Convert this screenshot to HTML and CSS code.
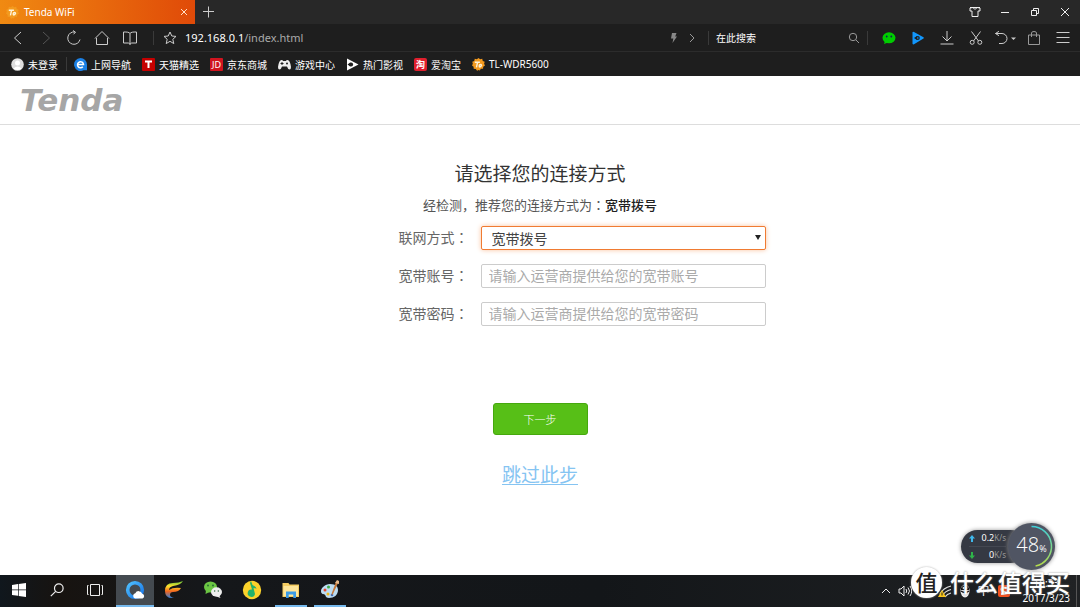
FILE: index.html
```html
<!DOCTYPE html>
<html lang="zh-CN">
<head>
<meta charset="utf-8">
<title>Tenda WiFi</title>
<link rel="stylesheet" href="styles.css">
</head>
<body>
<svg width="0" height="0" class="defs" aria-hidden="true">
  <defs>
    <linearGradient id="ring" x1="0" y1="0" x2="0" y2="1"><stop offset="0" stop-color="#3fd0d8"/><stop offset="1" stop-color="#b5dc4a"/></linearGradient>
    <linearGradient id="flame" x1="0" y1="0" x2="0" y2="1"><stop offset="0" stop-color="#5fc33a"/><stop offset=".3" stop-color="#ffe32e"/><stop offset=".6" stop-color="#f4661c"/><stop offset="1" stop-color="#2b7fe0"/></linearGradient>
    <linearGradient id="qring" x1="0" y1="0" x2="1" y2="1"><stop offset="0" stop-color="#4fc0ff"/><stop offset="1" stop-color="#1673e6"/></linearGradient>
    <symbol id="gear" viewBox="0 0 14 14">
      <path d="M7 0l1.800 1.400 2.200-.5.6 2.200 2.100.9-.7 2.100 1 2-1.900 1.200-.2 2.300-2.300.1L8.300 13.500 7 12.900l-1.500.9-1.400-1.900-2.300-.2-.1-2.300L0 8.100l.9-2L.3 4l2.100-.9L3 .9l2.200.5z" fill="#f39a1f"/>
      <path d="M3 4.500h5.500M6 4.500L4.800 10M7.500 9.500c3 0 3.500-2.500 1.700-2.500-1.700 0-2.200 2.500-.2 3" fill="none" stroke="#fff3d8" stroke-width="1.500"/>
    </symbol>
  </defs>
</svg>

<header class="browser">
  <div class="tabs">
    <div class="tab">
      <svg class="fav"><use href="#gear"/></svg>
      <span class="tab-title">Tenda WiFi</span>
      <button class="icon-btn tab-close" aria-label="关闭标签"><svg width="8" height="8" viewBox="0 0 8 8"><path d="M1 1l6 6M7 1L1 7"/></svg></button>
    </div>
    <button class="icon-btn new-tab" aria-label="新标签"><svg width="12" height="12" viewBox="0 0 12 12"><path d="M5.500.5v11M0 5.500h11"/></svg></button>
    <div class="window-controls">
      <button class="icon-btn" aria-label="皮肤"><svg width="12" height="12" viewBox="0 0 12 12"><path d="M4 1.500L1 2v3h2v5.500h6V5h2V2L8 1.500C7.500 3.500 4.500 3.500 4 1.500zM1 1.500h10"/></svg></button>
      <button class="icon-btn" aria-label="最小化"><svg width="10" height="10" viewBox="0 0 10 10"><path d="M1 5.500h8"/></svg></button>
      <button class="icon-btn" aria-label="还原"><svg width="10" height="10" viewBox="0 0 10 10"><path d="M1.500 3.500h5v5h-5zM3.500 3.500v-2h5v5h-2"/></svg></button>
      <button class="icon-btn" aria-label="关闭"><svg width="10" height="10" viewBox="0 0 10 10"><path d="M1 1l8 8M9 1L1 9"/></svg></button>
    </div>
  </div>

  <div class="toolbar">
    <nav class="nav">
      <button class="icon-btn" aria-label="后退"><svg width="16" height="16" viewBox="0 0 16 16"><path d="M11 2L4.500 8l6.500 6"/></svg></button>
      <button class="icon-btn dim" aria-label="前进"><svg width="16" height="16" viewBox="0 0 16 16"><path d="M5 2l6.500 6L5 14"/></svg></button>
      <button class="icon-btn" aria-label="刷新"><svg width="16" height="16" viewBox="0 0 16 16"><path d="M14 9.500A6.200 6.200 0 1 1 9 2M7 .5L9.500 2.200 7.500 4.300"/></svg></button>
      <button class="icon-btn" aria-label="主页"><svg width="16" height="16" viewBox="0 0 16 16"><path d="M1 8.500L8 1.500l7 7M2.500 8v6.500h11V8"/></svg></button>
      <button class="icon-btn" aria-label="阅读"><svg width="16" height="16" viewBox="0 0 16 16"><path d="M8 3.500C7 2 5 2 1.500 2v11H6c1 0 2 .5 2 1.500 0-1 1-1.500 2-1.500h4.500V2C11 2 9 2 8 3.500zv11"/></svg></button>
    </nav>
    <i class="sep"></i>
    <div class="address">
      <button class="icon-btn" aria-label="收藏"><svg width="14" height="14" viewBox="0 0 14 14"><path d="M7 1l1.800 4 4.200.4-3.200 2.900 1 4.300L7 10.300l-3.800 2.300 1-4.300L1 5.400 5.200 5z"/></svg></button>
      <div class="url" role="textbox" aria-label="地址"><b>192.168.0.1</b>/index.html</div>
      <button class="icon-btn" aria-label="极速模式"><svg width="10" height="12" viewBox="0 0 10 12"><path d="M3 1h4.500L6.200 4.500H8L3.500 11l.8-4.500H2z" class="bolt"/></svg></button>
      <button class="icon-btn grey" aria-label="展开"><svg width="10" height="10" viewBox="0 0 10 10"><path d="M3 1l4 4-4 4"/></svg></button>
    </div>
    <i class="sep"></i>
    <div class="search">
      <input type="text" placeholder="在此搜索" aria-label="在此搜索">
      <button class="icon-btn grey" aria-label="搜索"><svg width="12" height="12" viewBox="0 0 12 12"><circle cx="5" cy="5" r="3.700"/><path d="M8 8l3 3"/></svg></button>
    </div>
    <i class="sep"></i>
    <div class="tools">
      <button class="icon-btn" aria-label="微信"><svg width="14" height="14" viewBox="0 0 14 14"><g stroke="none"><ellipse cx="7" cy="6.800" rx="6.500" ry="5.500" fill="#0c0"/><path d="M3 10l-1 3 4-1.500z" fill="#0c0"/><circle cx="4.700" cy="5.500" r=".9" fill="#125"/><circle cx="9.300" cy="5.500" r=".9" fill="#125"/></g></svg></button>
      <button class="icon-btn" aria-label="视频"><svg width="14" height="14" viewBox="0 0 14 14"><g stroke="none"><path d="M1.500 1.200Q2 .3 3 1l9.500 5.300q.8.600 0 1.300L3 13.300q-1 .4-1.500-.5z" fill="#1296fb"/><path d="M3 7l3-2v4z" fill="#1e1e1e"/><circle cx="6.800" cy="7" r="2" fill="#1e1e1e"/><circle cx="6.800" cy="7" r=".8" fill="#1296fb"/></g></svg></button>
      <button class="icon-btn" aria-label="下载"><svg width="14" height="14" viewBox="0 0 14 14"><path d="M7 0v10M2.500 5.500L7 10l4.500-4.500M.5 13h13"/></svg></button>
      <button class="icon-btn" aria-label="截图"><svg width="14" height="14" viewBox="0 0 14 14"><path d="M2.500.5l7 9.500M11.500.5L4.500 10"/><circle cx="3.200" cy="11.300" r="2"/><circle cx="10.800" cy="11.300" r="2"/></svg></button>
      <button class="icon-btn" aria-label="撤销"><svg width="22" height="14" viewBox="0 0 22 14"><path d="M1.500 2.500H8a5 5 0 0 1 0 10H5M5 .3L1.500 2.500 5 4.700"/><path d="M17 6.500h5L19.500 9z" fill="#ccc" stroke="none"/></svg></button>
      <button class="icon-btn grey" aria-label="购物"><svg width="14" height="14" viewBox="0 0 14 14"><path d="M1.500 4h11v9.500h-11zM4.500 6V2Q4.500.5 7 .5T9.500 2v4"/></svg></button>
      <button class="icon-btn" aria-label="菜单"><svg width="14" height="14" viewBox="0 0 14 14"><path d="M.5 1.500h13M.5 6.500h13M.5 11.500h13"/></svg></button>
    </div>
  </div>

  <nav class="bookmarks">
    <a href="#"><svg viewBox="0 0 13 13"><circle cx="6.500" cy="6.500" r="6.300" fill="#ddd"/><circle cx="6.500" cy="5" r="2.500" fill="#fff"/><path d="M2.500 10.500Q6.500 6.500 10.500 10.500 6.500 13.500 2.500 10.500z" fill="#fff"/></svg>未登录</a>
    <i class="sep"></i>
    <a href="#"><svg viewBox="0 0 13 13"><path d="M6.500 0a6.500 6.500 0 1 0 3 12.300H13V6.500A6.500 6.500 0 0 0 6.500 0z" fill="#1b80e5"/><path d="M3.500 6.500h6A3 3 0 1 0 8.800 8.700" fill="none" stroke="#fff" stroke-width="1.500"/></svg>上网导航</a>
    <a href="#"><svg viewBox="0 0 13 13"><rect width="13" height="13" rx="1" fill="#c40000"/><path d="M3 3.500h7M6.500 3.500V10" stroke="#fff" stroke-width="2"/></svg>天猫精选</a>
    <a href="#"><span class="badge jd">JD</span>京东商城</a>
    <a href="#"><svg viewBox="0 0 13 13"><path d="M3.500 2Q5 2 5 3h3Q8 2 9.500 2 12 2 13 9q0 2.500-1.500 2.500T9 8.500H4q-1 3-2.500 3T0 9Q1 2 3.500 2z" fill="#eee"/><path d="M2.500 5.500h3M4 4v3" stroke="#1e1e1e"/><circle cx="9" cy="5.500" r="1" fill="#1e1e1e"/></svg>游戏中心</a>
    <a href="#"><svg viewBox="0 0 13 13"><path d="M1 .5L12.500 6.500 1 12.500z" fill="#fff"/><path d="M1.500 6.500l3-2.300v4.600z" fill="#1e1e1e"/><circle cx="5.200" cy="6.500" r="1.900" fill="#1e1e1e"/></svg>热门影视</a>
    <a href="#"><span class="badge tao">淘</span>爱淘宝</a>
    <a href="#"><svg viewBox="0 0 14 14"><use href="#gear"/></svg>TL-WDR5600</a>
  </nav>
</header>

<div class="site-header"><span class="logo">Tenda</span></div>

<main class="page">
  <h1>请选择您的连接方式</h1>
  <p class="detected">经检测，推荐您的连接方式为<span lang="zh-Hant" class="colon">：</span><strong>宽带拨号</strong></p>
  <form class="form">
    <label for="mode">联网方式<span lang="zh-Hant" class="colon">：</span></label>
    <div class="select-wrap"><select id="mode"><option>宽带拨号</option></select></div>
    <label for="account">宽带账号<span lang="zh-Hant" class="colon">：</span></label>
    <input id="account" type="text" placeholder="请输入运营商提供给您的宽带账号">
    <label for="password">宽带密码<span lang="zh-Hant" class="colon">：</span></label>
    <input id="password" type="text" placeholder="请输入运营商提供给您的宽带密码">
  </form>
  <button class="next" type="button">下一步</button>
  <a class="skip" href="#">跳过此步</a>
</main>

<footer class="taskbar">
  <div class="system">
    <button aria-label="开始"><svg width="14" height="14" viewBox="0 0 14 14"><path d="M0 2l6-.9v5.500H0zM6.700 1L14 0v6.600H6.700zM0 7.300h6v5.500L0 12zM6.700 7.300H14V14l-7.300-1z" fill="#fff"/></svg></button>
    <button aria-label="搜索"><svg width="14" height="14" viewBox="0 0 14 14" fill="none" stroke="#eee" stroke-width="1.200"><circle cx="8.800" cy="5.200" r="4.300"/><path d="M5.700 8.300L.8 13.200"/></svg></button>
    <button aria-label="任务视图"><svg width="18" height="14" viewBox="0 0 18 14" fill="none" stroke="#eee"><path d="M4.500 1.500h9v11h-9zM2.500 2.500h-1v9h1M15.500 2.500h1v9h-1"/></svg></button>
  </div>
  <div class="apps">
    <button class="open active" aria-label="QQ浏览器"><svg width="20" height="20" viewBox="0 0 20 20"><circle cx="10" cy="10" r="7.300" fill="none" stroke="url(#qring)" stroke-width="3.600"/><path d="M10 18.500a2.700 2.700 0 0 1 .3-5.200 3.700 3.700 0 0 1 6.900.4 2.500 2.500 0 0 1 .3 4.800z" fill="#fff"/></svg></button>
    <button aria-label="迅游"><svg width="20" height="20" viewBox="0 0 20 20"><path d="M19 1Q17 5 9 6 5 7 5 10q4-3 12-2-2 4-8 4-3 0-3 3 0 2 4 3-9 1-9-7Q1 3 9 3q6 0 10-2z" fill="url(#flame)"/></svg></button>
    <button aria-label="微信"><svg width="20" height="20" viewBox="0 0 20 20"><ellipse cx="7.500" cy="7" rx="6.500" ry="5.500" fill="#6cc644"/><path d="M3 10l-.5 4 4-2z" fill="#6cc644"/><ellipse cx="13.500" cy="12" rx="5.500" ry="4.700" fill="#eee"/><path d="M16 15l1.500 3-4-1.500z" fill="#eee"/><g fill="#263"><circle cx="5" cy="5.500" r=".9"/><circle cx="10" cy="5.500" r=".9"/><circle cx="11.700" cy="11" r=".7"/><circle cx="15.300" cy="11" r=".7"/></g></svg></button>
    <button aria-label="QQ音乐"><svg width="20" height="20" viewBox="0 0 20 20"><circle cx="10" cy="10" r="9.200" fill="#fbd22b"/><path d="M9 1l1.500 4q4 2 4 4-1-1-3-1l1.500 6a3.700 3.700 0 1 1-3-4.500L8 3z" fill="#22b26b"/></svg></button>
    <button class="open" aria-label="文件资源管理器"><svg width="20" height="20" viewBox="0 0 20 20"><path d="M1.500 3h6l1 1.500h9.500V17h-16.500z" fill="#f5cd62"/><path d="M2.500 6h14.500v10H2.500z" fill="#ffe69a"/><path d="M5 18v-6.500h10V18h-2.700v-3.500H7.700V18z" fill="#3b9be6"/></svg></button>
    <button class="open" aria-label="画图"><svg width="20" height="20" viewBox="0 0 20 20"><path d="M10 4c6 0 8 3 8 6 0 5-4 8-9 8-4 0-3-3-4.500-3.500S1 14 1 11s4-7 9-7z" fill="#bcdcf2"/><circle cx="5" cy="10" r="1.500" fill="#e3482e"/><circle cx="8.500" cy="7" r="1.500" fill="#3caa44"/><circle cx="8" cy="14" r="1.500" fill="#f0b71b"/><circle cx="12" cy="15" r="1.300" fill="#2c68c8"/><path d="M18 3l-5 11-1.500 2 .3-3L16 2z" fill="#c77b3c"/><path d="M15 3l2-3 2 1v3z" fill="#e8b98a"/></svg></button>
  </div>
  <div class="tray">
    <svg width="10" height="8" viewBox="0 0 10 8" fill="none" stroke="#eee"><path d="M1 6l4-4 4 4"/></svg>
    <svg width="14" height="12" viewBox="0 0 14 12" fill="none" stroke="#eee"><path d="M1 4h2l3-3v10L3 8H1zM8 4q1.500 2 0 4M10 2.500q3 3.500 0 7M12 1q3.500 5 0 10"/></svg>
    <svg class="wifi" width="14" height="14" viewBox="0 0 14 14"><path d="M2 10Q5 4 13 2M4 12q3-5 9-6.500M7 13q2-3 6-4" fill="none" stroke="#ddd" stroke-width="1.200"/><path d="M0 13L4 6l4 7z" fill="#f8c51c"/><path d="M4 8.500v3" stroke="#222"/></svg>
    <svg width="12" height="14" viewBox="0 0 12 14"><ellipse cx="6" cy="7" rx="4.500" ry="6.500" fill="#eee"/><path d="M2 6V4q4-6 8 0v2z" fill="#111"/><path d="M2 7q4 3 8 0" stroke="#111" stroke-width="1.500" fill="none"/><circle cx="4.500" cy="4" r=".9" fill="#fff"/><circle cx="7.500" cy="4" r=".9" fill="#fff"/></svg>
    <span class="ime">中</span>
    <svg width="14" height="14" viewBox="0 0 14 14"><rect x="1" y="1" width="12" height="12" rx="2" fill="#f4511e"/><path d="M10 4Q4 3 4.500 5.500T9.500 8.500 4 10" fill="none" stroke="#fff" stroke-width="2"/></svg>
    <div class="clock"><span>18:33</span><span>2017/3/23</span></div>
  </div>
</footer>

<aside class="speed">
  <div class="rates">
    <div><svg width="6" height="7" viewBox="0 0 6 7"><path d="M3 0l3 3.500H4V7H2V3.500H0z" fill="#3fb8ec"/></svg><span><b>0.2</b>K/s</span></div>
    <div><svg width="6" height="7" viewBox="0 0 6 7"><path d="M3 7l3-3.500H4V0H2v3.500H0z" fill="#2fb44a"/></svg><span><b>0</b>K/s</span></div>
  </div>
  <div class="gauge">
    <svg class="arc" viewBox="0 0 46 46"><path d="M23 3.500a19.500 19.500 0 0 1 4 38.600" fill="none" stroke="url(#ring)" stroke-width="1.500"/></svg>
    <span class="pct">48<small>%</small></span>
  </div>
</aside>

<div class="watermark"><span class="mark">值</span><span>什么值得买</span></div>
</body>
</html>
```
FILE: styles.css
```css
* { box-sizing: border-box; }
body {
  margin: 0;
  min-height: 100vh;
  display: flex;
  flex-direction: column;
  position: relative;
  background: #fff;
  color: #333;
  font-family: "Noto Sans", "Noto Sans CJK SC", sans-serif;
}
.defs { position: absolute; }
button { border: 0; padding: 0; background: none; font: inherit; color: inherit; }
svg { display: block; flex: none; }

.browser { color: #fff; background: #1e1e1e; font-size: 10px; }
.tabs { display: flex; align-items: center; height: 24px; background: #282828; }
.tab {
  display: flex;
  align-items: center;
  gap: 5px;
  width: 195px;
  height: 24px;
  padding: 0 7px 0 6px;
  background: linear-gradient(90deg, #f08a12, #e04a08);
}
.fav { width: 13px; height: 13px; }
.tab-title { flex: 1; }
.icon-btn { display: flex; align-items: center; justify-content: center; flex: none; }
.icon-btn svg { fill: none; stroke: #ccc; stroke-width: 1; }
.icon-btn.dim svg { stroke: #555; }
.icon-btn.grey svg { stroke: #999; }
.icon-btn .bolt { fill: #888; stroke: none; }
.tab-close svg { stroke: #ffe0c8; }
.new-tab { width: 28px; }
.window-controls { display: flex; margin-left: auto; }
.window-controls .icon-btn { width: 30px; }
.window-controls svg { stroke: #eee; }

.toolbar { display: flex; align-items: center; height: 28px; border-bottom: 1px solid #2c2c2c; }
.nav { display: flex; padding: 0 9px 0 4px; }
.nav .icon-btn { width: 28px; }
.sep { width: 1px; height: 14px; background: #3a3a3a; flex: none; }
.address { flex: 1; display: flex; align-items: center; gap: 8px; padding: 0 11px 0 9px; }
.url { flex: 1; font-size: 11px; color: #aaa; }
.url b { font-weight: 400; color: #fff; }
.search { width: 158px; display: flex; align-items: center; padding: 0 7px; }
.search input {
  flex: 1;
  min-width: 0;
  padding: 0;
  border: 0;
  outline: 0;
  background: none;
  color: #fff;
  font: 10px "Noto Sans", "Noto Sans CJK SC", sans-serif;
}
.search input::placeholder { color: #fff; opacity: 1; }
.tools { display: flex; padding: 0 3px 0 6px; }
.tools .icon-btn { width: 29px; }

.bookmarks { display: flex; align-items: center; gap: 11px; height: 24px; padding: 0 11px; }
.bookmarks a { display: flex; align-items: center; gap: 4px; color: #fff; text-decoration: none; white-space: nowrap; }
.bookmarks .sep { margin: 0 -4px 0 -3px; }
.bookmarks svg { width: 13px; height: 13px; }
.badge {
  display: flex;
  align-items: center;
  justify-content: center;
  width: 13px;
  height: 13px;
  border-radius: 1px;
  background: #d0141f;
  font-size: 9px;
  line-height: 13px;
}
.tao { background: #e01f2d; font-weight: 700; border-radius: 2px; }

.site-header { display: flex; align-items: center; height: 49px; padding: 0 20px; border-bottom: 1px solid #ddd; }
.logo { color: #a6a6a6; font: italic 700 31px/34px "DejaVu Sans", sans-serif; }

.page {
  flex: 1;
  display: flex;
  flex-direction: column;
  align-items: center;
  padding: 34px 16px 16px;
  font-family: "Noto Sans CJK SC", sans-serif;
  font-weight: 300;
}
h1 { margin: 0; font-size: 19px; font-weight: 400; line-height: 28px; }
.detected { margin: 8px 0 11px; font-size: 13px; line-height: 20px; font-weight: 400; color: #555; }
.detected strong { color: #222; font-weight: 500; }
.form {
  display: grid;
  grid-template-columns: 1fr 285px;
  column-gap: 12px;
  row-gap: 14px;
  align-items: center;
  width: 100%;
  max-width: 451px;
}
.form label { text-align: right; font-size: 14px; line-height: 22px; padding-bottom: 2px; font-weight: 400; color: #666; }
.colon { font-family: "Noto Sans CJK TC", sans-serif; }
.form input, .form select {
  width: 100%;
  height: 24px;
  padding: 0 7px 2px;
  border: 1px solid #ccc;
  border-radius: 2px;
  background: #fff;
  color: #444;
  outline: 0;
  font: 14px "Noto Sans CJK SC", sans-serif;
}
.form input::placeholder { color: #aaa; opacity: 1; }
.form select { appearance: none; display: block; padding: 0 10px; border-color: #f07b32; box-shadow: 0 0 5px #f9c19c; }
.select-wrap { position: relative; }
.select-wrap::after {
  content: "";
  position: absolute;
  right: 5px;
  top: 9px;
  border: 3px solid transparent;
  border-top: 5px solid #222;
  border-bottom: 0;
}
.next {
  width: 95px;
  height: 32px;
  margin-top: 77px;
  border: 1px solid #46a80e;
  border-radius: 3px;
  background: #57bf17;
  color: #fff;
  font-size: 11px;
}
.skip { margin-top: 25px; color: #85c4f2; font-size: 19px; line-height: 28px; font-weight: 400; text-underline-offset: 2px; }

.taskbar {
  display: flex;
  height: 32px;
  background: linear-gradient(90deg, #10171d, #171310 60px, #15171a 200px, #131619 600px, #202224);
  color: #fff;
}
.system, .apps { display: flex; }
.apps { gap: 1px; padding-left: 2px; }
.taskbar button { display: flex; align-items: center; justify-content: center; width: 38px; border-bottom: 2px solid transparent; }
.taskbar .open { width: 32px; margin: 0 3px; border-bottom-color: #76b9ed; }
.taskbar .active { width: 38px; margin: 0; background: #444a50; }
.tray { display: flex; align-items: center; gap: 7px; margin-left: auto; margin-right: 3px; padding-right: 6px; border-right: 1px solid #555; }
.wifi { margin-left: 19px; }
.ime { font-size: 12px; line-height: 16px; }
.clock { display: flex; flex-direction: column; align-items: center; margin-left: 5px; font-size: 10px; line-height: 15px; }

.speed { position: absolute; right: 25px; bottom: 37px; display: flex; align-items: center; color: #fff; }
.rates {
  width: 66px;
  margin-right: -19px;
  padding: 0 21px 0 8px;
  border-radius: 17px;
  background: #353943;
  box-shadow: 0 0 4px #999;
  font-size: 9px;
  line-height: 16px;
}
.rates div { display: flex; align-items: center; justify-content: space-between; color: #999; white-space: nowrap; }
.rates div + div { border-top: 1px solid #444852; }
.rates span { font-size: 8px; }
.rates b { font-size: 9px; font-weight: 400; color: #fff; }
.gauge {
  position: relative;
  display: flex;
  align-items: center;
  justify-content: center;
  width: 47px;
  height: 47px;
  border-radius: 50%;
  background: #505563;
  box-shadow: 0 0 4px #888;
}
.arc { position: absolute; inset: 0; }
.pct { font: 300 20px/24px "Open Sans", sans-serif; }
.pct small { font-size: 9px; font-weight: 400; }

.watermark {
  position: absolute;
  right: 10px;
  bottom: 8px;
  display: flex;
  align-items: center;
  gap: 8px;
  color: #fff;
  font: 500 24px/34px "Noto Sans CJK SC", sans-serif;
  text-shadow: 0 0 2px #888;
}
.mark {
  width: 31px;
  height: 31px;
  border-radius: 50%;
  background: #fff;
  color: #222;
  font-size: 22px;
  line-height: 29px;
  text-align: center;
  text-shadow: none;
  box-shadow: 0 0 2px #aaa;
}
```
